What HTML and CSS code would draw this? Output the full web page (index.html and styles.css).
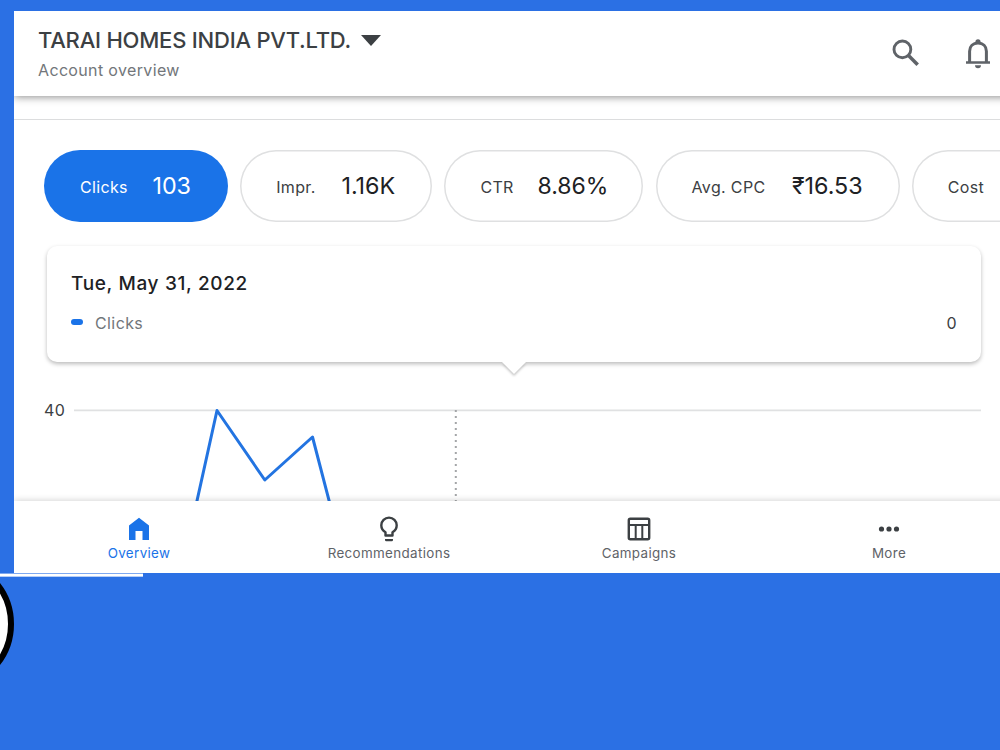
FILE: index.html
```html
<!DOCTYPE html>
<html lang="en">
<head>
    <meta charset="UTF-8">
    <meta name="viewport" content="width=device-width, initial-scale=1.0">
    <title>Account overview</title>
    <link rel="stylesheet" href="styles.css">
</head>
<body>
    <div class="app">
        <!-- Header -->
        <header class="header">
            <div class="account">
                <h1><span class="account-name">TARAI HOMES INDIA PVT.LTD.</span>
                    <svg class="caret" width="20" height="11" viewBox="0 0 20 11"><path d="M0 0h20l-10 11z" fill="#3c4043"/></svg>
                </h1>
                <p>Account overview</p>
            </div>
            <div class="header-icons">
                <svg width="28" height="28" viewBox="0 0 28 28" fill="none" stroke="#5f6368">
                    <circle cx="10.4" cy="10.4" r="8.4" stroke-width="2.9"/>
                    <path d="M16.5 16.5l9.2 9.2" stroke-width="3.5"/>
                </svg>
                <svg width="26" height="30" viewBox="0 0 26 30">
                    <path d="M4.6 24V12.2C4.6 7.4 8 4 13 4s8.4 3.4 8.4 8.2V24" fill="none" stroke="#5f6368" stroke-width="3"/>
                    <path d="M1 22.3h24v2.5H1zM10.4 4V2.8a2.6 2.6 0 0 1 5.2 0V4zM10 26.3h6a3 3 0 0 1-6 0z" fill="#5f6368"/>
                </svg>
            </div>
        </header>

        <main class="content">
            <!-- Metric chips -->
            <div class="chips">
                <div class="chip selected"><span class="label">Clicks</span><span class="value">103</span></div>
                <div class="chip"><span class="label">Impr.</span><span class="value">1.16K</span></div>
                <div class="chip"><span class="label">CTR</span><span class="value percent">8.86%</span></div>
                <div class="chip"><span class="label">Avg. CPC</span><span class="value">₹16.53</span></div>
                <div class="chip"><span class="label">Cost</span></div>
            </div>

            <!-- Selected day -->
            <div class="day-card">
                <h2>Tue, May 31, 2022</h2>
                <div class="day-row">
                    <span class="dash"></span>
                    <span class="series">Clicks</span>
                    <span class="count">0</span>
                </div>
                <svg class="pointer" width="28" height="15" viewBox="0 0 28 15"><path d="M2 0h24L14 12z" fill="#fff"/></svg>
            </div>

            <!-- Clicks chart -->
            <div class="chart">
                <span class="axis-label">40</span>
                <svg width="907" height="102" viewBox="0 0 907 102">
                    <path d="M0 10.3h907" stroke="#e0e1e2" stroke-width="1.7"/>
                    <path d="M381.8 10v92" stroke="#a4a6a8" stroke-width="2" stroke-dasharray="2 4"/>
                    <path d="M122.5 103L143 10.5L190.8 80L238.5 37L255.7 103" fill="none" stroke="#2374e1" stroke-width="3" stroke-linejoin="round"/>
                </svg>
            </div>
        </main>

        <!-- Bottom navigation -->
        <nav class="bottom-nav">
            <a class="active">
                <svg width="28" height="28" viewBox="0 0 28 28"><path d="M4 25V10.5L14 2.8l10 7.7V25h-6.5v-9h-7v9z" fill="#1a73e8"/></svg>
                <span>Overview</span>
            </a>
            <a>
                <svg width="28" height="28" viewBox="0 0 28 28">
                    <path d="M10.5 20.5v-3.2C7.9 15.8 6.3 13.2 6.3 10.3a7.7 7.7 0 0 1 15.4 0c0 2.9-1.6 5.5-4.2 7v3.2z" fill="none" stroke="#3c4043" stroke-width="2.4" stroke-linejoin="round"/>
                    <path d="M10 24h8v1a1.3 1.3 0 0 1-1.3 1.3h-5.4A1.3 1.3 0 0 1 10 25z" fill="#3c4043"/>
                </svg>
                <span>Recommendations</span>
            </a>
            <a>
                <svg width="28" height="28" viewBox="0 0 28 28" fill="none" stroke="#3c4043">
                    <rect x="3.8" y="3.8" width="20.4" height="20.4" rx="1.5" stroke-width="2.4"/>
                    <path d="M4 10h20M10.7 10v14M17.3 10v14" stroke-width="2"/>
                </svg>
                <span>Campaigns</span>
            </a>
            <a>
                <svg width="28" height="28" viewBox="0 0 28 28" fill="#3c4043"><circle cx="6.5" cy="14" r="2.6"/><circle cx="14" cy="14" r="2.6"/><circle cx="21.5" cy="14" r="2.6"/></svg>
                <span>More</span>
            </a>
        </nav>
    </div>
    <div class="rule"></div>
    <div class="ring"></div>
</body>
</html>
```
FILE: styles.css
```css
/* Reset and body styling */
* {
    margin: 0;
    padding: 0;
    box-sizing: border-box;
}

body {
    position: relative;
    height: 750px;
    padding: 11px 0 0 14px;
    overflow: hidden;
    background-color: #2b70e4;
    font-family: Inter, "Liberation Sans", sans-serif;
    color: #3c4043;
}

svg {
    display: block;
    flex-shrink: 0;
}

/* The app is wider than the page and runs off its right edge */
.app {
    display: flex;
    flex-direction: column;
    width: 1000px;
    height: 562px;
    background-color: #fff;
    overflow: hidden;
}

/* Header */
.header {
    display: flex;
    justify-content: space-between;
    height: 85px;
    padding: 0 23px 0 24px;
    box-shadow: 0 1px 8px rgba(0, 0, 0, 0.45);
}

.account {
    padding-top: 15px;
}

.account h1 {
    display: flex;
    align-items: center;
    gap: 10px;
    height: 28px;
    font-size: 22px;
    font-weight: 500;
    letter-spacing: -0.22px;
}

.account p {
    margin-top: 6px;
    font-size: 16px;
    line-height: 20px;
    letter-spacing: 0.35px;
    color: #72767a;
}

.header-icons {
    display: flex;
    gap: 45px;
    padding-top: 28px;
}

/* Content between header and navigation */
.content {
    flex: 1;
    min-height: 0;
    margin-top: 23px;
    padding: 30px 0 0 30px;
    border-top: 1px solid #dcddde;
}

.chips {
    display: grid;
    grid-template-columns: 184px 192px 199px 244px 200px;
    gap: 12.2px;
}

.chip {
    display: flex;
    justify-content: space-between;
    align-items: center;
    height: 72px;
    padding: 0 36px;
    border-radius: 36px;
    box-shadow: inset 0 0 0 1.5px #dfe0e1;
    line-height: 72px;
    white-space: nowrap;
}

.chip.selected {
    background-color: #1a73e8;
    box-shadow: none;
    color: #fff;
}

.label {
    padding-top: 2px;
    font-size: 16px;
    letter-spacing: 0.35px;
}

.value {
    margin-right: 1px;
    font-size: 23.3px;
    color: #202124;
}

.value.percent {
    margin-right: -1px;
    font-size: 23px;
}

.selected .value {
    color: #fff;
}

/* Selected day card */
.day-card {
    position: relative;
    width: 934px;
    height: 116px;
    margin: 24px 0 0 3px;
    padding: 25px 24px 0;
    border-radius: 10px;
    box-shadow: 0 2px 4px rgba(0, 0, 0, 0.27);
}

.day-card h2 {
    font-size: 19px;
    font-weight: 500;
    line-height: 26px;
    letter-spacing: 0.65px;
    color: #202124;
}

.day-row {
    display: flex;
    align-items: center;
    margin-top: 15px;
    font-size: 16px;
    line-height: 22px;
    letter-spacing: 0.4px;
}

.dash {
    width: 12px;
    height: 6px;
    margin: -2px 12px 0 0;
    border-radius: 3px;
    background-color: #1a73e8;
}

.series {
    color: #72767a;
}

.count {
    margin-left: auto;
}

.pointer {
    position: absolute;
    top: 116px;
    left: 453px;
    filter: drop-shadow(0 2px 1px rgba(0, 0, 0, 0.22));
}

/* Chart */
.chart {
    display: flex;
    padding-top: 37px;
}

.chart svg {
    margin-top: 1px;
}

.axis-label {
    width: 30px;
    font-size: 16px;
    line-height: 22px;
    letter-spacing: 0.4px;
}

/* Bottom navigation */
.bottom-nav {
    position: relative;
    display: grid;
    grid-template-columns: repeat(4, 250px);
    flex-shrink: 0;
    height: 72px;
    background-color: #fff;
    box-shadow: 0 -1px 6px rgba(0, 0, 0, 0.16);
}

.bottom-nav a {
    display: flex;
    flex-direction: column;
    align-items: center;
    gap: 1px;
    padding-top: 14px;
    font-size: 13.4px;
    line-height: 18px;
    letter-spacing: 0.35px;
    color: #5f6368;
}

.bottom-nav .active {
    color: #1a73e8;
}

/* Shapes on the blue backdrop */
.rule {
    width: 143px;
    height: 4px;
    margin-left: -14px;
    border-top: 1px solid #7fa9f0;
    border-bottom: 1px solid #b5cdf7;
    background-color: #fff;
}

.ring {
    position: absolute;
    top: 557px;
    left: -120px;
    width: 134px;
    height: 134px;
    border: 6px solid #000;
    border-radius: 50%;
    background-color: #fff;
}
```
